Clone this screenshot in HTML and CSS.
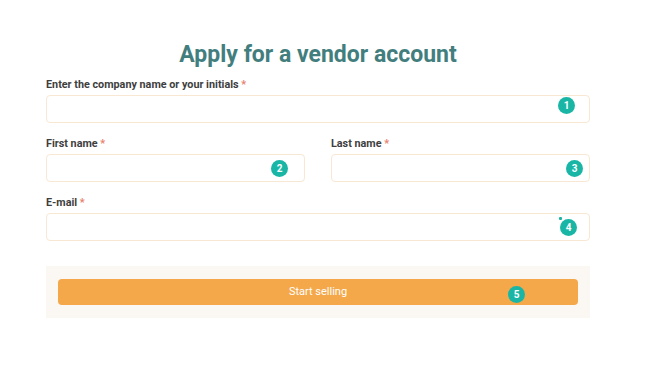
FILE: index.html
```html
<!DOCTYPE html>
<html>
<head>
<meta charset="utf-8">
<link rel="stylesheet" href="styles.css">
</head>
<body>
<div class="page">
  <h1 class="title">Apply for a vendor account</h1>
  <form class="form">
    <div class="field">
      <label class="label">Enter the company name or your initials <span class="req">*</span></label>
      <div class="input-wrap">
        <input class="input" type="text">
        <span class="badge b1">1</span>
      </div>
    </div>
    <div class="row">
      <div class="field">
        <label class="label">First name <span class="req">*</span></label>
        <div class="input-wrap">
          <input class="input" type="text">
          <span class="badge b2">2</span>
        </div>
      </div>
      <div class="field">
        <label class="label">Last name <span class="req">*</span></label>
        <div class="input-wrap">
          <input class="input" type="text">
          <span class="badge b3">3</span>
        </div>
      </div>
    </div>
    <div class="field">
      <label class="label">E-mail <span class="req">*</span></label>
      <div class="input-wrap">
        <input class="input" type="email">
        <span class="badge b4">4</span>
      </div>
    </div>
    <div class="actions">
      <button class="btn" type="button">Start selling</button>
      <span class="badge b5">5</span>
    </div>
  </form>
</div>
</body>
</html>
```
FILE: styles.css
```css
* { box-sizing: border-box; }
html, body { margin: 0; padding: 0; background: #fff; }
body { font-family: Roboto, "Liberation Sans", sans-serif; }
.page {
  width: 544px;
  margin-left: 46px;
  padding-top: 39px;
}
.title {
  margin: 0 0 7px;
  text-align: center;
  font-size: 23px;
  line-height: 32px;
  font-weight: 700;
  color: #437e7e;
}
.form { display: flex; flex-direction: column; }
.field { display: flex; flex-direction: column; margin-bottom: 14px; }
.row .field { margin-bottom: 14px; }
.label {
  font-size: 10.8px;
  line-height: 14px;
  font-weight: 700;
  color: #3e3e3e;
  margin-bottom: 3px;
}
.req { color: #e8806e; }
.input-wrap { position: relative; }
.input {
  display: block;
  width: 100%;
  height: 28px;
  border: 1px solid #f8e7d2;
  border-radius: 4px;
  background: #fff;
  outline: none;
  margin: 0;
}
.row {
  display: grid;
  grid-template-columns: 259px 259px;
  column-gap: 26px;
}
.badge {
  position: absolute;
  width: 17px;
  height: 17px;
  border-radius: 50%;
  background: #19b6a6;
  color: #fff;
  font-size: 10px;
  font-weight: 700;
  line-height: 17px;
  text-align: center;
}
.b1 { right: 15px; top: 2px; }
.b2 { right: 17px; top: 6px; }
.b3 { right: 7px; top: 6px; }
.b4 { right: 13px; top: 6px; }
.b4::before {
  content: "";
  position: absolute;
  left: -1px;
  top: -2px;
  width: 3px;
  height: 3px;
  background: #19b6a6;
  border-radius: 1px;
}
.b5 { left: 462px; top: 20px; }
.actions {
  position: relative;
  margin-top: 11px;
  background: #fbf7f2;
  padding: 13px 12px;
}
.btn {
  display: block;
  width: 100%;
  height: 26px;
  border: none;
  border-radius: 4px;
  background: #f4a84a;
  color: #fff;
  font-family: Roboto, "Liberation Sans", sans-serif;
  font-size: 11px;
  padding: 0 0 2px;
}
```
